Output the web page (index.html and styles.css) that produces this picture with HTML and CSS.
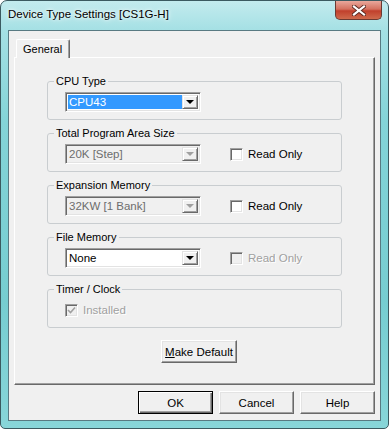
FILE: index.html
```html
<!doctype html>
<html>
<head>
<title>Device Type Settings</title>
<meta name=viewport content="width=device-width, initial-scale=1">
<link rel="stylesheet" href="styles.css">
</head>
<body>
<div class="window">

  <div class="titlebar">
    <span class="title">Device Type Settings [CS1G-H]</span>
    <div class="close">
      <svg width="14" height="11" viewBox="0 0 14 11">
        <path d="M2 1.5 L12 9.5 M12 1.5 L2 9.5" stroke="#5a2a22" stroke-width="4" stroke-linecap="square"/>
        <path d="M2 1.5 L12 9.5 M12 1.5 L2 9.5" stroke="#fff" stroke-width="2.2" stroke-linecap="square"/>
      </svg>
    </div>
  </div>

  <div class="client">
    <div class="tabs">
      <div class="tab">General</div>
    </div>

    <div class="panel">

      <fieldset class="group">
        <legend>CPU Type</legend>
        <div class="row">
          <div class="combo">
            <span class="value"><span class="selected">CPU43</span></span>
            <span class="drop"><span class="arrow"></span></span>
          </div>
        </div>
      </fieldset>

      <fieldset class="group">
        <legend>Total Program Area Size</legend>
        <div class="row">
          <div class="combo disabled">
            <span class="value">20K [Step]</span>
            <span class="drop"><span class="arrow"></span></span>
          </div>
          <span class="check"></span>
          <span class="checklabel">Read Only</span>
        </div>
      </fieldset>

      <fieldset class="group">
        <legend>Expansion Memory</legend>
        <div class="row">
          <div class="combo disabled">
            <span class="value">32KW [1 Bank]</span>
            <span class="drop"><span class="arrow"></span></span>
          </div>
          <span class="check"></span>
          <span class="checklabel">Read Only</span>
        </div>
      </fieldset>

      <fieldset class="group">
        <legend>File Memory</legend>
        <div class="row">
          <div class="combo">
            <span class="value">None</span>
            <span class="drop"><span class="arrow"></span></span>
          </div>
          <span class="check off"></span>
          <span class="checklabel off">Read Only</span>
        </div>
      </fieldset>

      <fieldset class="group">
        <legend>Timer / Clock</legend>
        <div class="row timer">
          <span class="check off ticked">
            <svg width="9" height="9" viewBox="0 0 9 9"><path d="M1 4 L3.5 6.5 L8 1.5" stroke="#a0a0a0" stroke-width="1.6" fill="none"/></svg>
          </span>
          <span class="checklabel off">Installed</span>
        </div>
      </fieldset>

      <div class="defaultrow">
        <button class="btn wide"><u>M</u>ake Default</button>
      </div>

    </div>

    <div class="buttons">
      <button class="btn default">OK</button>
      <button class="btn">Cancel</button>
      <button class="btn">Help</button>
    </div>
  </div>

</div>
</body>
</html>
```

FILE: styles.css
```css
body {
    margin: 0;
    background-color: #ffffff;
    font-family: "Liberation Sans", Arial, sans-serif;
    font-size: 11px;
    color: black;
}

.window {
    box-sizing: border-box;
    width: 389px;
    height: 429px;
    border: 1px solid #3b5a60;
    border-radius: 7px 7px 5px 5px;
    background: linear-gradient(180deg, #c3ebee 0px, #a4e0e4 30px, #84d4d8 120px, #76cdd1 300px, #88d6d9 429px);
    display: flex;
    flex-direction: column;
    overflow: hidden;
}

.titlebar {
    height: 29px;
    display: flex;
    align-items: flex-start;
    padding-left: 7px;
}
.title {
    margin-top: 7px;
    font-size: 11.5px;
    color: #000;
    text-shadow: 0 0 6px #fff, 0 0 3px #fff;
    flex: 1;
}
.close {
    width: 47px;
    height: 19px;
    margin-right: 6px;
    box-sizing: border-box;
    border: 1px solid #6b3a32;
    border-top: none;
    border-radius: 0 0 5px 5px;
    background: linear-gradient(180deg, #e9a89c 0%, #d4715f 45%, #c1402c 55%, #cf6a4c 100%);
    display: flex;
    align-items: center;
    justify-content: center;
}

.client {
    box-sizing: border-box;
    margin: 0 7px 7px 7px;
    flex: 1;
    background-color: #f0f0f0;
    border: 1px solid #587a82;
    padding: 8px 5px 0 5px;
    display: flex;
    flex-direction: column;
}

.tabs {
    display: flex;
    padding-left: 2px;
    height: 18px;
    position: relative;
    z-index: 1;
}
.tab {
    box-sizing: border-box;
    height: 19px;
    padding: 3px 7px 0 6px;
    background-color: #f0f0f0;
    border-top: 1px solid #ffffff;
    border-left: 1px solid #ffffff;
    border-right: 1px solid #696969;
    box-shadow: inset -1px 0 0 #a0a0a0;
    border-radius: 2px 2px 0 0;
}

.panel {
    box-sizing: border-box;
    height: 328px;
    border-top: 1px solid #ffffff;
    border-left: 1px solid #ffffff;
    border-right: 1px solid #696969;
    border-bottom: 1px solid #696969;
    box-shadow: inset -1px -1px 0 #a0a0a0;
    padding: 17px 0 0 32px;
}

.group {
    box-sizing: border-box;
    width: 295px;
    margin: 0 0 7px 0;
    padding: 4px 0 7px 6px;
    border: 1px solid #c9cdd0;
    border-radius: 3px;
    min-width: 0;
}
.group legend {
    padding: 0 2px;
    line-height: 13px;
}

.row {
    display: flex;
    align-items: center;
    padding-left: 11px;
    height: 20px;
}

.combo {
    box-sizing: border-box;
    width: 136px;
    height: 20px;
    display: flex;
    background-color: #ffffff;
    border-top: 1px solid #a0a0a0;
    border-left: 1px solid #a0a0a0;
    border-right: 1px solid #ffffff;
    border-bottom: 1px solid #ffffff;
    box-shadow: inset 1px 1px 0 #696969, inset -1px -1px 0 #e3e3e3;
    padding: 2px 2px 2px 2px;
}
.combo .value {
    flex: 1;
    display: flex;
    align-items: center;
    padding-left: 1px;
    font-size: 11.5px;
}
.combo .selected {
    display: block;
    flex: 1;
    align-self: stretch;
    line-height: 14px;
    background-color: #3399ff;
    color: #ffffff;
    padding-left: 1px;
    margin-left: -1px;
}
.combo .drop {
    box-sizing: border-box;
    width: 16px;
    background-color: #f0f0f0;
    border-top: 1px solid #e3e3e3;
    border-left: 1px solid #e3e3e3;
    border-right: 1px solid #696969;
    border-bottom: 1px solid #696969;
    box-shadow: inset 1px 1px 0 #ffffff, inset -1px -1px 0 #a0a0a0;
    display: flex;
    align-items: center;
    justify-content: center;
}
.arrow {
    width: 0;
    height: 0;
    border-left: 4px solid transparent;
    border-right: 4px solid transparent;
    border-top: 4px solid #000;
}
.combo.disabled {
    background-color: #f0f0f0;
}
.combo.disabled .value {
    color: #6d6d6d;
}
.combo.disabled .arrow {
    border-top-color: #a0a0a0;
}

.check {
    box-sizing: border-box;
    width: 13px;
    height: 13px;
    margin-left: 29px;
    background-color: #ffffff;
    border-top: 1px solid #a0a0a0;
    border-left: 1px solid #a0a0a0;
    border-right: 1px solid #ffffff;
    border-bottom: 1px solid #ffffff;
    box-shadow: inset 1px 1px 0 #696969, inset -1px -1px 0 #e3e3e3;
    display: flex;
    align-items: center;
    justify-content: center;
}
.check.off {
    background-color: #f0f0f0;
}
.checklabel {
    margin-left: 5px;
    font-size: 11.5px;
}
.checklabel.off {
    color: #a0a0a0;
    text-shadow: 1px 1px 0 #ffffff;
}
.row.timer .check {
    margin-left: 0;
}

.defaultrow {
    padding: 5px 0 0 114px;
}

.btn {
    box-sizing: border-box;
    width: 75px;
    height: 23px;
    margin: 0;
    padding: 0;
    font-family: "Liberation Sans", Arial, sans-serif;
    font-size: 11.5px;
    color: #000;
    background-color: #f0f0f0;
    border-top: 1px solid #ffffff;
    border-left: 1px solid #ffffff;
    border-right: 1px solid #696969;
    border-bottom: 1px solid #696969;
    box-shadow: inset -1px -1px 0 #a0a0a0, inset 1px 1px 0 #e3e3e3;
}
.btn.wide {
    width: 76px;
}
.btn.default {
    border: 1px solid #000;
    box-shadow: inset 1px 1px 0 #ffffff, inset -1px -1px 0 #696969, inset -2px -2px 0 #a0a0a0;
}

.buttons {
    display: flex;
    justify-content: flex-end;
    gap: 6px;
    margin-top: 6px;
}
```
